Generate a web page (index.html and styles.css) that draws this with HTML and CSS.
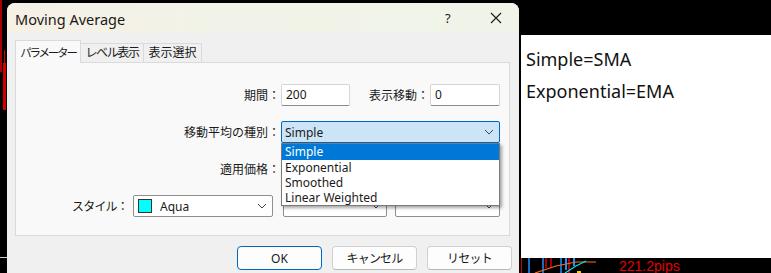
FILE: index.html
```html
<!DOCTYPE html>
<html lang="ja">
<head>
<meta charset="utf-8">
<title>Moving Average</title>
<link rel="stylesheet" href="styles.css">
</head>
<body>
<div class="screen">
  <div class="left-strip">
    <svg width="7" height="273" viewBox="0 0 7 273">
      <line x1="1" y1="0" x2="1" y2="72" stroke="#e00000" stroke-width="1.5"/>
      <rect x="3" y="63" width="3" height="47" fill="#d00000"/>
      <line x1="4.5" y1="50" x2="4.5" y2="63" stroke="#d00000" stroke-width="1"/>
      <line x1="0" y1="257.5" x2="7" y2="257.5" stroke="#cfcfcf" stroke-width="1"/>
    </svg>
  </div>

  <div class="dialog">
    <div class="titlebar">
      <span class="title">Moving Average</span>
      <span class="help">?</span>
      <span class="close">
        <svg width="12" height="12" viewBox="0 0 12 12"><path d="M1 1 L11 11 M11 1 L1 11" stroke="#1a1a1a" stroke-width="1.1" fill="none"/></svg>
      </span>
    </div>
    <div class="dlg-body">
      <div class="tabs">
        <div class="tab active">パラメーター</div>
        <div class="tab t2">レベル表示</div>
        <div class="tab t3">表示選択</div>
      </div>
      <div class="panel">
        <div class="row">
          <label class="lbl lbl-main">期間：</label>
          <div class="input w68">200</div>
          <label class="lbl lbl-shift">表示移動：</label>
          <div class="input w69">0</div>
        </div>
        <div class="row">
          <label class="lbl lbl-main">移動平均の種別：</label>
          <div class="select open w218">
            <span class="sel-text">Simple</span>
            <svg class="chev" width="10" height="6" viewBox="0 0 10 6"><path d="M1 1 L5 5 L9 1" stroke="#444" stroke-width="1" fill="none"/></svg>
            <ul class="dropdown">
              <li class="hl">Simple</li>
              <li>Exponential</li>
              <li>Smoothed</li>
              <li>Linear Weighted</li>
            </ul>
          </div>
        </div>
        <div class="row">
          <label class="lbl lbl-main">適用価格：</label>
          <div class="select w218">
            <span class="sel-text"></span>
            <svg class="chev" width="10" height="6" viewBox="0 0 10 6"><path d="M1 1 L5 5 L9 1" stroke="#444" stroke-width="1" fill="none"/></svg>
          </div>
        </div>
        <div class="row style-row">
          <label class="lbl lbl-style">スタイル：</label>
          <div class="select w140">
            <span class="swatch"></span>
            <span class="sel-text">Aqua</span>
            <svg class="chev" width="10" height="6" viewBox="0 0 10 6"><path d="M1 1 L5 5 L9 1" stroke="#444" stroke-width="1" fill="none"/></svg>
          </div>
          <div class="select w103">
            <span class="linestyle"></span>
            <svg class="chev" width="10" height="6" viewBox="0 0 10 6"><path d="M1 1 L5 5 L9 1" stroke="#444" stroke-width="1" fill="none"/></svg>
          </div>
          <div class="select w104">
            <span class="linestyle"></span>
            <svg class="chev" width="10" height="6" viewBox="0 0 10 6"><path d="M1 1 L5 5 L9 1" stroke="#444" stroke-width="1" fill="none"/></svg>
          </div>
        </div>
      </div>
      <div class="buttons">
        <button class="btn primary">OK</button>
        <button class="btn">キャンセル</button>
        <button class="btn">リセット</button>
      </div>
    </div>
  </div>

  <div class="right">
    <div class="note">
      <p>Simple=SMA</p>
      <p>Exponential=EMA</p>
    </div>
    <div class="chart-strip">
      <svg class="mini-chart" width="80" height="15" viewBox="0 0 80 15">
        <line x1="0.5" y1="0" x2="0.5" y2="15" stroke="#d00000"/>
        <line x1="8" y1="0" x2="8" y2="15" stroke="#1e90ff" stroke-width="1.5"/>
        <line x1="22" y1="0" x2="22" y2="15" stroke="#1e90ff" stroke-width="1.5"/>
        <line x1="25" y1="0" x2="25" y2="10" stroke="#e00000" stroke-width="1.5"/>
        <line x1="30" y1="0" x2="30" y2="10" stroke="#e00000" stroke-width="1.5"/>
        <line x1="40" y1="0" x2="40" y2="15" stroke="#1e90ff" stroke-width="1.5"/>
        <line x1="45" y1="0" x2="45" y2="12" stroke="#1e90ff" stroke-width="2"/>
        <line x1="48" y1="0" x2="48" y2="15" stroke="#e00000" stroke-width="1.5"/>
        <line x1="53" y1="0" x2="53" y2="8" stroke="#1e90ff" stroke-width="2"/>
        <path d="M14 15 L35 8 L55 4 L75 4" stroke="#ff6a1a" stroke-width="1.2" fill="none"/>
        <path d="M44 15 L55 8 L65 3" stroke="#00e5ee" stroke-width="1.2" fill="none"/>
        <rect x="56" y="13" width="4" height="2" fill="#ffd000"/>
      </svg>
      <span class="pips">221.2pips</span>
    </div>
  </div>
</div>
</body>
</html>
```

FILE: styles.css
```css
* { box-sizing: border-box; }

html, body {
  margin: 0;
  padding: 0;
  background: #000;
}

body {
  font-family: "Noto Sans", "Noto Sans CJK JP", sans-serif;
  color: #1a1a1a;
}

.screen {
  width: 771px;
  height: 273px;
  overflow: hidden;
  display: flex;
  align-items: flex-start;
  background: #000;
}

.left-strip {
  width: 7px;
  height: 273px;
  flex: none;
}
.left-strip svg { display: block; }

/* ---------- dialog ---------- */
.dialog {
  width: 512px;
  height: 290px;
  flex: none;
  margin-top: 3px;
  background: #f0f0f0;
  border-radius: 8px 8px 0 0;
  overflow: hidden;
}

.titlebar {
  height: 30px;
  display: flex;
  align-items: center;
  padding-left: 8px;
  background: linear-gradient(90deg, #f6f0e5 0%, #f2f3e8 40%, #f0f4e8 100%);
}

.title {
  font-size: 14.5px;
  color: #1a1a1a;
  flex: 1;
  padding-top: 1px;
}

.help {
  font-family: "Noto Sans", sans-serif;
  font-size: 13px;
  width: 12px;
  margin-right: 33px;
  color: #1a1a1a;
}

.close {
  width: 12px;
  height: 12px;
  margin-right: 17px;
  display: flex;
}

.dlg-body {
  padding: 7px 9px 0 8px;
}

.tabs {
  display: flex;
  align-items: flex-end;
  height: 22px;
  position: relative;
  z-index: 1;
}

.tab {
  height: 19px;
  border: 1px solid #dadada;
  border-bottom: none;
  border-left: none;
  background: #f0f0f0;
  font-size: 12px;
  line-height: 18px;
  padding: 0;
  text-align: center;
  white-space: nowrap;
  color: #1a1a1a;
  overflow: hidden;
}

.tab.active {
  height: 23px;
  margin-bottom: -1px;
  border-left: 1px solid #dadada;
  background: #f9f9f9;
  padding-top: 3px;
  width: 66px;
  font-size: 11.5px;
  letter-spacing: -2.2px;
}

.tab.t2 { width: 63px; letter-spacing: -1.4px; }
.tab.t3 { width: 58px; }

.panel {
  height: 174px;
  border: 1px solid #dadada;
  background: #f9f9f9;
  padding: 21px 0 0 0;
  display: flex;
  flex-direction: column;
  gap: 15px;
}

.row {
  display: flex;
  align-items: center;
  height: 22px;
}

.lbl {
  font-size: 12px;
  color: #1a1a1a;
  white-space: nowrap;
}

.lbl-main {
  width: 264px;
  text-align: right;
}

.lbl-shift {
  width: 79px;
  text-align: right;
}

.lbl-style {
  width: 112px;
  text-align: right;
  letter-spacing: -0.8px;
}

.input {
  height: 22px;
  border: 1px solid #d6d6d6;
  border-bottom-color: #8a8a8a;
  background: #fff;
  border-radius: 2px;
  font-size: 12px;
  line-height: 20px;
  padding-left: 4px;
  margin-left: 1px;
}

.w68 { width: 69px; }
.w69 { width: 70px; }

.select {
  position: relative;
  height: 22px;
  border: 1px solid #8f8f8f;
  border-radius: 2px;
  background: #fff;
  display: flex;
  align-items: center;
  font-size: 12px;
  margin-left: 1px;
  padding-left: 3px;
}

.select.open {
  background: #cce4f7;
  border-color: #0067c0;
}

.w218 { width: 219px; }
.w140 { width: 140px; }
.w103 { width: 104px; margin-left: 10px; }
.w104 { width: 105px; margin-left: 8px; }

.style-row .w140 { margin-left: 5px; }

.sel-text {
  flex: 1;
  padding-top: 1px;
}

.chev {
  margin-right: 5px;
  flex: none;
}

.swatch {
  width: 14px;
  height: 14px;
  background: #00ffff;
  border: 1px solid #333;
  margin: 0 8px 0 1px;
  flex: none;
}

.linestyle {
  flex: 1;
  height: 3px;
  background: #111;
  margin: 7px 14px 0 0;
  align-self: flex-start;
}

.dropdown {
  position: absolute;
  left: -1px;
  top: 21px;
  width: 219px;
  margin: 0;
  padding: 0;
  list-style: none;
  background: #fff;
  border: 1px solid #7a7a7a;
  box-shadow: 2px 2px 3px rgba(0, 0, 0, 0.35);
  z-index: 5;
}

.dropdown li {
  height: 15px;
  line-height: 15px;
  padding-left: 3px;
  font-size: 12px;
  color: #1a1a1a;
}

.dropdown li.hl {
  background: #0078d7;
  color: #fff;
  height: 16px;
  line-height: 16px;
}

.buttons {
  display: flex;
  justify-content: flex-end;
  gap: 10px;
  padding: 10px 0 0 0;
  margin-right: -2px;
}

.btn {
  width: 85px;
  height: 24px;
  border: 1px solid #d0d0d0;
  border-bottom-color: #b8b8b8;
  border-radius: 4px;
  background: #fdfdfd;
  font-family: "Noto Sans", "Noto Sans CJK JP", sans-serif;
  font-size: 12px;
  letter-spacing: -0.8px;
  color: #1a1a1a;
  padding: 0;
}

.btn.primary {
  border: 1.5px solid #0067c0;
  letter-spacing: 0;
}

/* ---------- right area ---------- */
.right {
  flex: 1;
  margin-left: 2px;
  padding-top: 35px;
  display: flex;
  flex-direction: column;
}

.note {
  height: 223px;
  background: #fff;
  padding: 8px 0 0 5px;
}

.note p {
  margin: 0;
  font-family: "Noto Sans", sans-serif;
  font-size: 18px;
  line-height: 32px;
  color: #111;
}

.chart-strip {
  height: 15px;
  background: #000;
  display: flex;
  align-items: center;
}

.mini-chart {
  display: block;
  flex: none;
}

.pips {
  margin-left: 18px;
  font-family: "Liberation Sans", Arial, sans-serif;
  font-size: 14px;
  color: #e60000;
  line-height: 15px;
  padding-top: 2px;
}
```
